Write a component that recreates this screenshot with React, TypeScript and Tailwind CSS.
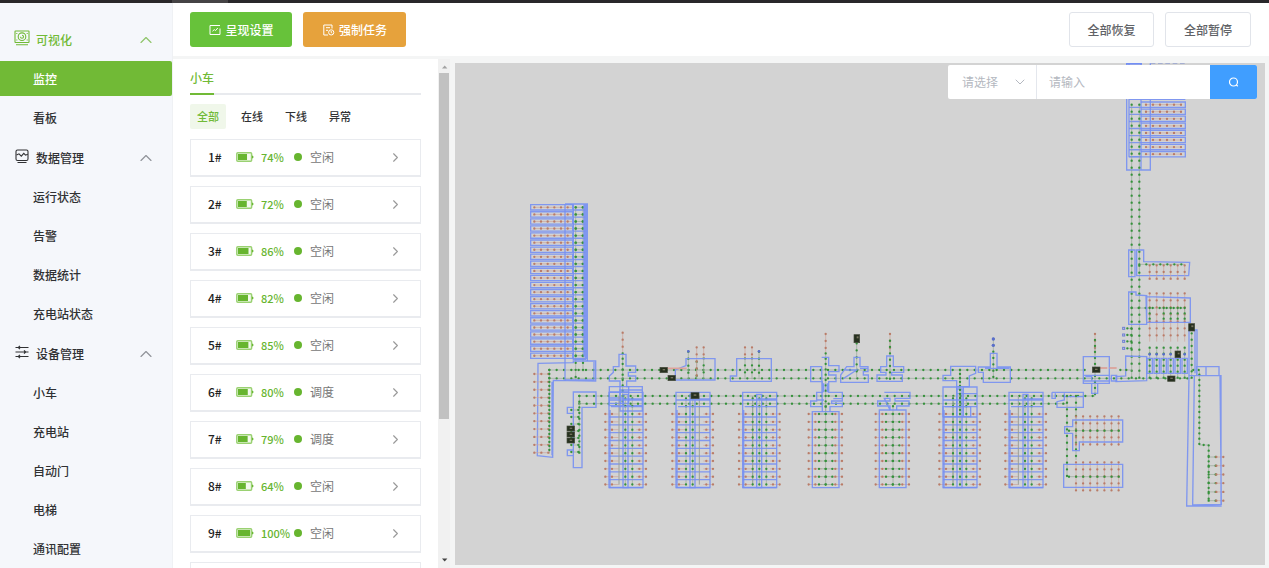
import { useState } from 'react';
import { ChevronDown, ChevronRight, ChevronUp } from 'lucide-react';

const menu = [
  { title: '可视化', icon: 'view', items: ['监控', '看板'] },
  { title: '数据管理', icon: 'data', items: ['运行状态', '告警', '数据统计', '充电站状态'] },
  { title: '设备管理', icon: 'device', items: ['小车', '充电站', '自动门', '电梯', '通讯配置'] },
];

const filters = ['全部', '在线', '下线', '异常'];

const cars = [
  { id: '1#', power: 74, status: '空闲' },
  { id: '2#', power: 72, status: '空闲' },
  { id: '3#', power: 86, status: '空闲' },
  { id: '4#', power: 82, status: '空闲' },
  { id: '5#', power: 85, status: '空闲' },
  { id: '6#', power: 80, status: '调度' },
  { id: '7#', power: 79, status: '调度' },
  { id: '8#', power: 64, status: '空闲' },
  { id: '9#', power: 100, status: '空闲' },
];

function MenuIcon({ name }: { name: string }) {
  return (
    <svg width="16" height="16" viewBox="0 0 16 16" fill="none" stroke="currentColor" strokeWidth="1.1" className="mb-1">
      {name === 'view' && (
        <>
          <rect x="1" y="1" width="14" height="11.5" rx="0.5" />
          <circle cx="8" cy="6.7" r="3.8" />
          <path d="M8 5.2a1.5 1.5 0 1 1-1.5 1.5M2.8 3v1M2.8 9.5v1M13.2 3v1M13.2 9.5v1M2 14.8h12" />
        </>
      )}
      {name === 'data' && (
        <>
          <rect x="2" y="2" width="12" height="10.5" rx="1.5" />
          <path d="M2.5 7l2.5-1.2 2.3 2.4L9.8 5.4l1.7 1.8 2.3-1M3.5 14.5h9" />
        </>
      )}
      {name === 'device' && (
        <path d="M1.5 3.5h13M1.5 8h13M1.5 12.5h13M6 1.8L4.2 3.5 6 5.2M10 6.3L11.8 8 10 9.7M6 10.8l-1.8 1.7L6 14.2" />
      )}
    </svg>
  );
}

function Sidebar() {
  const [active, setActive] = useState('监控');
  return (
    <nav className="w-[172px] shrink-0 overflow-hidden bg-[#f5f7fb] pt-[18px]">
      {menu.map((group) => (
        <div key={group.title}>
          <button
            className={`mb-[2px] flex h-[38px] w-full items-center pr-4 pl-[14px] ${group.icon === 'view' ? 'text-[#71ba36]' : 'text-[#303133]'}`}
          >
            <MenuIcon name={group.icon} />
            <span className="ml-[6px]">{group.title}</span>
            <ChevronUp size={20} strokeWidth={1.4} className={`ml-auto ${group.icon === 'view' ? 'text-[#8fc569]' : 'text-[#909399]'}`} />
          </button>
          {group.items.map((item) => (
            <a
              key={item}
              href="#"
              onClick={() => setActive(item)}
              className={`mb-1 flex h-[35px] items-center rounded-r-xs pl-[33px] ${active === item ? 'bg-[#71ba36] text-white' : 'text-[#303133]'}`}
            >
              {item}
            </a>
          ))}
        </div>
      ))}
    </nav>
  );
}

function Battery({ power }: { power: number }) {
  return (
    <svg width="18" height="10" viewBox="0 0 18 10">
      <rect x="0.8" y="0.8" width="14.8" height="8.4" rx="1" fill="#f4faef" stroke="#9ad172" strokeWidth="1.5" />
      <rect x="2" y="2" width={(12.2 * power) / 100} height="6" fill="#67b52f" />
      <path d="M16 3.2l1.8 1.8L16 6.8z" fill="#67b52f" />
    </svg>
  );
}

function CarPanel() {
  const [filter, setFilter] = useState('全部');
  return (
    <aside className="flex w-[282px] shrink-0">
      <div className="min-w-0 flex-1 overflow-hidden bg-white px-[17px]">
        <div className="h-9 border-b-2 border-[#e8eaee]">
          <button className="h-9 border-b-2 border-[#71ba36] pt-[3px] text-[#71ba36]">小车</button>
        </div>
        <div className="mt-[9px] mb-[10px] flex gap-2">
          {filters.map((f) => (
            <button
              key={f}
              onClick={() => setFilter(f)}
              className={`h-[25px] rounded-xs px-[7px] pb-px text-[11px] ${filter === f ? 'bg-[#f0f7ea] text-[#71ba36]' : 'text-[#303133]'}`}
            >
              {f}
            </button>
          ))}
        </div>
        {cars.map((car) => (
          <button
            key={car.id}
            className="mb-[9px] flex h-[38px] w-full items-center border border-b-2 border-[#e9ebef] bg-white px-[17px] pb-px text-left"
          >
            <span className="w-7 text-[#222]">{car.id}</span>
            <Battery power={car.power} />
            <span className="ml-[7px] w-[33px] text-[11px] text-[#67b52f]">{car.power}%</span>
            <span className="size-2 rounded-full bg-[#67b52f]" />
            <span className="ml-2 font-normal text-[#777]">{car.status}</span>
            <ChevronRight size={15} strokeWidth={1.8} className="ml-auto text-[#999]" />
          </button>
        ))}
        <div className="h-[38px] border border-b-2 border-[#e9ebef]" />
      </div>
      <div className="flex w-3 shrink-0 flex-col items-center justify-between bg-[#f1f1f1]">
        <svg width="11" height="14" viewBox="0 0 11 14">
          <path d="M3 9.5h5.4L5.7 6.5z" fill="#a3a3a3" />
        </svg>
        <div className="mb-auto h-[68%] w-[10px] bg-[#c1c1c1]" />
        <svg width="11" height="14" viewBox="0 0 11 14">
          <path d="M3 4.5h5.4L5.7 7.5z" fill="#444" />
        </svg>
      </div>
      <div className="w-[5px] bg-[#f4f5f5]" />
    </aside>
  );
}

/* ---- map ---- */

const colors = {
  green: { dot: '#35913b', line: '#96a896' },
  red: { dot: '#b97c68', line: '#cfa398' },
};

type Tone = keyof typeof colors;

// a stretch of track with a station dot every `step` units
function Track({ d, tone = 'green', step = 21 }: { d: string; tone?: Tone; step?: number }) {
  return (
    <>
      <path d={d} stroke={colors[tone].line} strokeWidth="2" />
      <path d={d} stroke={colors[tone].dot} strokeWidth="7" strokeLinecap="round" strokeDasharray={`0 ${step}`} />
    </>
  );
}

function Zones({ d }: { d: string }) {
  return <path d={d} stroke="#7790f2" strokeWidth="4" opacity="0.9" />;
}

function Vehicle({ x, y, w = 24, h = 18 }: { x: number; y: number; w?: number; h?: number }) {
  return (
    <>
      <rect x={x} y={y} width={w} height={h} fill="#26301f" stroke="#454b3c" strokeWidth="2" />
      <rect x={x + 8} y={y + 5} width={w / 3} height={h / 4} fill="#77745f" />
    </>
  );
}

const range = (n: number) => Array.from({ length: n }, (_, i) => i);

type BlockProps = { x: number; cols: number[]; top?: number; boxed?: boolean; aisle?: number };

// storage block with ten shelves on each side of the aisle
function Block({ x, cols, top = 217, boxed = true, aisle = 30 }: BlockProps) {
  const right = x + (boxed ? 102 : 80);
  return (
    <>
      {range(10).map((i) => {
        const y = 282 + i * 23.5;
        return (
          <g key={i}>
            <Track tone="red" d={`M${x - 11} ${y}H${x + 29}`} step={20} />
            <Track tone="red" d={`M${right + 9} ${y}H${right - 20}`} step={20} />
            {!boxed && <Track d={`M${x + 20} ${y}H${x + 62}`} step={20} />}
            {boxed && <Zones d={`M${x} ${y + 9}H${right}`} />}
          </g>
        );
      })}
      {boxed && <path d={`M${x + aisle} 228V494`} stroke="#9a9f9a" strokeWidth="3" />}
      {cols.map((c) => (
        <Track key={c} d={`M${x + c} ${boxed ? 235 : 258.5}V495`} step={23.5} />
      ))}
      <Zones d={`M${x} ${top}H${right}V503H${x}z`} />
      {boxed && (
        <Zones d={`M${x + 42} ${top + 6}h15V503h-15zM${x + 42} ${top + 20}H${right}M${x} 240H${right}M${x + 6} 260H${right}M${x + 3} 270V503`} />
      )}
    </>
  );
}

function WarehouseMap() {
  return (
    <svg className="block h-full w-full" viewBox="1365 189 2430 1506" preserveAspectRatio="xMidYMid meet" fill="none">
      {/* main lines */}
      <Track d="M1648 1110H3255" step={22} />
      <Track d="M1648 1135H3575" step={22} />
      <Track d="M1738 1188H3285" step={22} />
      <Track d="M1738 1211H3200" step={22} />

      {/* left rack */}
      <g transform="translate(1530 570)">
        {range(22).map((i) => {
          const y = 52 + i * 21.2;
          return (
            <g key={i}>
              <Track tone="red" d={`M73 ${y}H186`} step={20} />
              <Track d={`M197 ${y}H220`} />
              <Zones d={`M62 ${y - 8}H188V${y + 8}H62zM188 ${y + 8}H226`} />
            </g>
          );
        })}
        <Track d="M197 52V570" step={21.2} />
        <Track d="M219 52V545" step={21.2} />
        <Zones d="M165 42V573M165 42H232V513M190 42V508H226V42M228 42V508M222 42V500" />
        <Zones d="M84 520L190 518V513H257V573L130 571L128 802L82 797zM252 516V570H165M126 575V796" />
        {range(11).map((i) => (
          <Track key={i} tone="red" d={`M73 ${552 + i * 23.6}H118`} />
        ))}
        <Track d="M118 540V790" step={12} />
        <Track d="M208 618V790" step={17} />
        {range(7).map((i) => (
          <Track key={i} d={`M184 ${660 + i * 21}H208`} />
        ))}
        <Zones d="M190 606H258V652H216V833H190zM190 652H172V670H190M190 780H172V797H190" />
        <Vehicle x={171} y={708} w={23} h={15} />
        <Vehicle x={171} y={726} w={23} h={15} />
        <Vehicle x={171} y={744} w={23} h={15} />
        <Track tone="red" d="M338 428V490" />
        <Track d="M338 490V650" step={16} />
        <Zones d="M327 493H348V528H377V547H355V558H377V573H350V590H356V640H330V573H298V558L310 547V530H327z" />
        <Zones d="M298 590H397V647H298zM330 600H397V663H330zM298 606H356M298 624H340V640H300" />
      </g>

      {/* middle blocks */}
      <g transform="translate(1980 960)">
        <Block x={-153} cols={[49, 70]} />
        <Block x={48} cols={[30, 50]} aisle={70} />
        <Block x={248} cols={[30, 50, 71]} />
        <Block x={457} cols={[40]} top={275} boxed={false} />

        <Track d="M85 95V178" />
        <Track d="M110 125V178" />
        <Track d="M131 115V178" />
        <Track tone="red" d="M110 82V170" />
        <Track tone="red" d="M131 82V120" />
        <Zones d="M78 116H165V180H46V150L78 137z" />
        <path d="M5 145H80" stroke="#dea39b" strokeWidth="5" />

        <Track d="M255 115V178" />
        <Track d="M276 115V178" />
        <Track d="M297 95V178" />
        <Track tone="red" d="M255 82V120" />
        <Track tone="red" d="M276 82V120" />
        <Zones d="M230 116H334V184H211V168H230z" />
        <circle cx="85" cy="94" r="4" fill="#5a6dcc" />
        <circle cx="297" cy="94" r="4" fill="#5a6dcc" />

        <Track tone="red" d="M497 42V105" />
        <Track d="M497 100V275" step={16} />
        <Zones d="M485 112H506V137H537V155H506V165H528V185H506V217H547V243H515V250H547V260H510V275M487 275V260H452V243H470V217H487V185H452V140H485zM491 190V217M502 190V217M470 240H492M520 236H545" />

        <Track d="M590 70V175" />
        <Zones d="M582 112H600V140H624V155H610V165H625V187H542V165L560 140H582zM600 145H622M556 150H590L550 176" />
        <Vehicle x={0} y={142} w={22} h={16} />
        <Vehicle x={24} y={166} w={22} h={16} />
        <Vehicle x={93} y={218} />
        <Vehicle x={582} y={44} w={17} h={24} />
      </g>

      <g transform="translate(2580 960)">
        <Block x={58} cols={[41]} top={270} boxed={false} />
        <Block x={249} cols={[30, 51, 70]} top={201} />
        <Block x={447} cols={[48, 68]} aisle={28} />

        <Track tone="red" d="M90 42V100" />
        <Track d="M90 62V180" step={19} />
        <Zones d="M80 108H100V140H131V157H95V165H127V184H51V165H78V157H62V140H80z" />
        <Zones d="M73 217H150V235H105V243H147V258H110V270M90 270V258H53V243H90V235H73z" />

        <Track d="M300 150V275" step={12} />
        <Zones d="M272 139H347V160L328 168V200H290V182H249V166H272zM290 200H310V290H290zM249 260H332V290H249z" />

        <Track d="M400 57V178" step={19} />
        <Zones d="M391 100H411V141H451V187H370V157H355V141H391zM375 145H448" />
        <circle cx="400" cy="57" r="5" fill="#5a6dcc" />
        <circle cx="400" cy="76" r="5" fill="#5a6dcc" />
      </g>

      {/* upper right rack */}
      <g transform="translate(2790 0)">
        {range(8).map((i) => {
          const y = 314 + i * 21.2;
          return (
            <g key={i}>
              <Track tone="red" d={`M648 ${y}H756`} />
              <Zones d={`M633 ${y - 8}H766V${y + 8}H633M597 ${y + 8}H633`} />
            </g>
          );
        })}
        <path d="M588 191H636" stroke="#728ef5" strokeWidth="6" />
        <path d="M662 190H766" stroke="#a5aed0" strokeWidth="4" strokeDasharray="14 8" />
        <Zones d="M590 190V510H633V190M597 190V470H633M661 190V510H633M597 298H766" />
        <Track d="M605 314V1135" />
        <Track d="M628 314V1135" />
      </g>

      {/* right side */}
      <g transform="translate(3120 690)">
        <Zones d="M266 60H285V140H266zM290 60H311V95L449 97L446 137H290z" />
        <Track d="M298 103H434" />
        <Track d="M275 234H434" />
        {range(6).map((i) => {
          const x = 329 + i * 21;
          return (
            <g key={x}>
              <Track tone="red" d={`M${x} 106V150`} step={20} />
              <Track tone="red" d={`M${x} 190V335`} />
              {i !== 1 && <Track d={`M${x} 234V267`} step={16} />}
              <Track d={`M${x} 353V445`} step={18} />
              <circle cx={x} cy="373" r="4" fill="#5a6dcc" />
              <Zones d={`M${x - 8} 385h16v45h-16z`} />
            </g>
          );
        })}
        <Zones d="M266 186H288V195L320 197V283H266zM318 200L451 204V277H320z" />
        {[295, 315, 334, 355].map((y) => (
          <g key={y}>
            <Track d={`M262 ${y}H275`} step={12} />
            <rect x="248" y={y - 3} width="6" height="6" stroke="#6b7cd6" strokeWidth="3" />
          </g>
        ))}

        <Track tone="red" d="M165 312V375" />
        <Track d="M165 330V498" step={18} />
        <Zones d="M130 380H208V460H130zM130 436H208V453H130zM155 460V490H173V460M136 440H155V453M214 436H230V453H214z" />
        <Zones d="M257 378L320 380V452L228 455V440L257 438z" />
        <path d="M180 414H232" stroke="#dd9a90" strokeWidth="5" strokeDasharray="22 6" />
        <Track d="M241 420H277" step={18} />

        <Zones d="M36 487H130V532H51V515L73 510V490M36 487V505H46V490M73 500H130" />
        <Track d="M81 498V740" step={20} />
        <Track d="M108 498V690" step={20} />
        {range(7).map((i) => (
          <g key={i}>
            <Track tone="red" d={`M${108 + i * 21.3} 559V648`} />
            <Track tone="red" d={`M${108 + i * 21.3} 697V783`} />
          </g>
        ))}
        <Track d="M87 602H240" step={21.3} />
        <Track d="M87 740H240" step={21.3} />
        <Zones d="M98 570H248V636H118V662H98V610H74V590H98zM71 703H248V772H71z" />

        <Track d="M455 310V445" step={19} />
        <Track d="M460 420H478V645H506V812" step={16} />
        {range(6).map((i) => (
          <g key={i}>
            <Track d={`M506 ${681 + i * 26.2}H528`} />
            <Track tone="red" d={`M529 ${681 + i * 26.2}H552`} />
          </g>
        ))}
        <Zones d="M447 300H471V437M465 300V430M463 437L458 825L544 823L540 437M447 300V437L440 828H543L543 437H448M470 410H537V437H470zM470 410H498V437" />
        <Vehicle x={157} y={411} w={23} h={16} />
        <Vehicle x={446} y={281} w={18} h={22} />
        <Vehicle x={405} y={363} w={17} h={20} />
        <Vehicle x={383} y={438} w={22} h={16} />
      </g>
    </svg>
  );
}

function SearchBar() {
  return (
    <form className="absolute top-[2px] right-2 flex h-[34px] w-[309px] overflow-hidden rounded-xs bg-white font-normal" onSubmit={(e) => e.preventDefault()}>
      <div className="relative w-[89px] border-r border-[#e4e7ed]">
        <select aria-label="请选择" className="h-full w-full appearance-none pl-[14px] text-[#b4b8c0] outline-none">
          <option>请选择</option>
        </select>
        <ChevronDown size={16} strokeWidth={1.5} className="pointer-events-none absolute top-[9px] right-2 text-[#b4b8c0]" />
      </div>
      <input aria-label="请输入" placeholder="请输入" className="min-w-0 flex-1 px-3 outline-none placeholder:text-[#b4b8c0]" />
      <button aria-label="搜索" className="flex w-[47px] items-center justify-center bg-[#409eff] text-white">
        <svg width="12" height="12" viewBox="0 0 12 12" fill="none" stroke="currentColor" strokeWidth="1.2">
          <circle cx="5.5" cy="6" r="4" />
          <path d="M8.2 8.8l1.6 1.4" />
        </svg>
      </button>
    </form>
  );
}

export default function App() {
  return (
    <div className="flex h-screen flex-col overflow-hidden bg-[#f4f5f5] font-['Noto_Sans_CJK_SC',sans-serif] text-xs font-medium">
      <div className="h-[3px] shrink-0 bg-[#29272a] pl-[172px]">
        <div className="h-full w-14 bg-[#454345]" />
      </div>
      <div className="flex min-h-0 flex-1">
        <Sidebar />
        <div className="flex min-w-0 flex-1 flex-col border-l border-[#eff1f4]">
          <header className="flex h-[53px] shrink-0 items-center gap-[11px] bg-white pr-[18px] pl-[17px]">
            <button className="flex h-[35px] w-[102px] items-center justify-center gap-1 rounded-[3px] bg-[#67c23a] text-white">
              <svg width="13" height="13" viewBox="0 0 13 13" fill="none" stroke="currentColor">
                <path d="M12 2.5H2v9h10v-6M4.5 8.2l1.8-1.6 1.2 1L9.8 5" />
              </svg>
              呈现设置
            </button>
            <button className="flex h-[35px] w-[103px] items-center justify-center gap-1 rounded-[3px] bg-[#e6a23c] text-white">
              <svg width="13" height="13" viewBox="0 0 13 13" fill="none" stroke="currentColor">
                <path d="M10 5.5V2H1.8v10H6M4 4.7h4M4 7.3h2" />
                <circle cx="9.2" cy="9.4" r="2.6" />
                <path d="M9.2 8v1.5l1 .6" />
              </svg>
              强制任务
            </button>
            <button className="ml-auto h-[35px] w-[85px] rounded-[3px] border border-[#e1e4ea] bg-white text-[#606266]">全部恢复</button>
            <button className="h-[35px] w-[86px] rounded-[3px] border border-[#e1e4ea] bg-white text-[#606266]">全部暂停</button>
          </header>
          <div className="flex min-h-0 flex-1 pt-[3px] pr-1">
            <CarPanel />
            <main className="relative mt-1 mb-[3px] min-w-0 flex-1 bg-[#d3d3d3]">
              <WarehouseMap />
              <SearchBar />
            </main>
          </div>
        </div>
      </div>
    </div>
  );
}
